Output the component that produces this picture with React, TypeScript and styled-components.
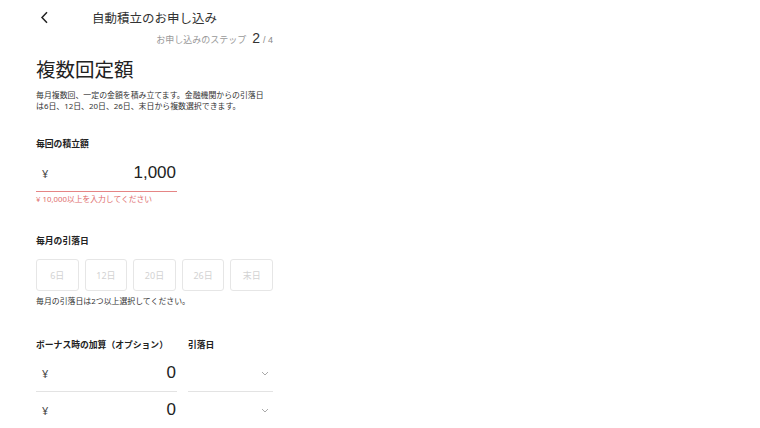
import styled, { createGlobalStyle } from "styled-components";

const GlobalStyle = createGlobalStyle`
  body {
    margin: 0;
    background: #fff;
    font-family: "Noto Sans", "Noto Sans CJK JP", sans-serif;
    color: #333;
  }
`;

const days = ["6日", "12日", "20日", "26日", "末日"];

const App = () => {
  return (
    <>
      <GlobalStyle />
      <Page>
        <Header>
          <BackButton type="button" aria-label="戻る">
            <svg width="9" height="13" viewBox="0 0 9 13">
              <path d="M7 1.2 L2 6.5 L7 11.8" fill="none" stroke="#222" strokeWidth="1.5" />
            </svg>
          </BackButton>
          <Title>自動積立のお申し込み</Title>
          <span />
        </Header>
        <StepRow>
          <StepLabel>お申し込みのステップ</StepLabel>
          <StepNow>2</StepNow>
          <StepTotal>/ 4</StepTotal>
        </StepRow>

        <Heading>複数回定額</Heading>
        <Description>
          毎月複数回、一定の金額を積み立てます。金融機関からの引落日
          <br />
          は6日、12日、20日、26日、末日から複数選択できます。
        </Description>

        <Label $gap={27}>毎回の積立額</Label>
        <AmountField $error>
          <Yen>¥</Yen>
          <Value>1,000</Value>
        </AmountField>
        <ErrorText>¥ 10,000以上を入力してください</ErrorText>

        <Label $gap={31}>毎月の引落日</Label>
        <DayGrid>
          {days.map((d) => (
            <DayButton key={d} type="button">
              {d}
            </DayButton>
          ))}
        </DayGrid>
        <Hint>毎月の引落日は2つ以上選択してください。</Hint>

        <BonusGrid>
          <Label $gap={0}>ボーナス時の加算（オプション）</Label>
          <Label $gap={0}>引落日</Label>
          {[0, 1].map((i) => (
            <BonusRow key={i}>
              <BonusAmount $first={i === 0}>
                <Yen>¥</Yen>
                <Value>0</Value>
              </BonusAmount>
              <Select $first={i === 0}>
                <svg width="8" height="5" viewBox="0 0 8 5">
                  <path d="M1 1 L4 4 L7 1" fill="none" stroke="#aaa" strokeWidth="1" />
                </svg>
              </Select>
            </BonusRow>
          ))}
        </BonusGrid>
      </Page>
    </>
  );
};

export default App;

const Page = styled.div`
  width: 237px;
  margin-left: 36px;
`;

const Header = styled.div`
  display: grid;
  grid-template-columns: 24px 1fr 24px;
  align-items: center;
  height: 28px;
  margin-top: 3px;
`;

const BackButton = styled.button`
  border: none;
  background: none;
  padding: 0 0 0 4px;
  display: flex;
  align-items: center;
  cursor: pointer;
`;

const Title = styled.h1`
  margin: 0;
  text-align: center;
  font-size: 12.5px;
  font-weight: 400;
  color: #333;
`;

const StepRow = styled.div`
  display: flex;
  justify-content: flex-end;
  align-items: baseline;
  height: 14px;
  line-height: 14px;
`;

const StepLabel = styled.span`
  font-size: 9px;
  color: #999;
  margin-right: 6px;
`;

const StepNow = styled.span`
  font-family: "Liberation Sans", sans-serif;
  font-size: 14px;
  color: #333;
  margin-right: 3px;
`;

const StepTotal = styled.span`
  font-family: "Liberation Sans", sans-serif;
  font-size: 9px;
  color: #888;
`;

const Heading = styled.h2`
  margin: 12px 0 0;
  font-family: "Noto Sans CJK JP", sans-serif;
  font-size: 19.5px;
  line-height: 24px;
  font-weight: 400;
  color: #222;
`;

const Description = styled.p`
  margin: 9px 0 0;
  font-size: 7.9px;
  line-height: 10.5px;
  white-space: nowrap;
  color: #333;
`;

const Label = styled.div<{ $gap: number }>`
  margin-top: ${(p) => p.$gap}px;
  font-size: 8.8px;
  line-height: 12px;
  font-weight: 700;
  color: #222;
`;

const AmountField = styled.div<{ $error?: boolean }>`
  display: flex;
  align-items: center;
  justify-content: space-between;
  height: 37px;
  padding: 0 1px 0 6px;
  border-bottom: 1px solid ${(p) => (p.$error ? "#e58585" : "#e3e3e3")};
  box-sizing: border-box;
  width: 141px;
  margin-top: 5px;
`;

const BonusAmount = styled(AmountField)<{ $first?: boolean }>`
  margin-top: ${(p) => (p.$first ? 4 : 0)}px;
`;

const Yen = styled.span`
  font-size: 11px;
  color: #444;
`;

const Value = styled.span`
  font-family: "Liberation Sans", sans-serif;
  font-size: 17px;
  font-weight: 400;
  color: #222;
`;

const ErrorText = styled.div`
  margin-top: 2px;
  font-size: 7.8px;
  line-height: 10px;
  color: #e06d6d;
`;

const DayGrid = styled.div`
  display: grid;
  grid-template-columns: repeat(5, 1fr);
  gap: 6px;
  margin-top: 12px;
`;

const DayButton = styled.button`
  height: 32px;
  border: 1px solid #e6e6e6;
  border-radius: 3px;
  background: #fff;
  font-family: inherit;
  font-size: 9px;
  color: #d2d2d2;
  padding: 0;
`;

const Hint = styled.div`
  margin-top: 5px;
  font-size: 7.9px;
  line-height: 10px;
  color: #333;
`;

const BonusGrid = styled.div`
  display: grid;
  grid-template-columns: 141px 85px;
  column-gap: 11px;
  margin-top: 33px;
`;

const BonusRow = styled.div`
  display: contents;
`;

const Select = styled.div<{ $first?: boolean }>`
  display: flex;
  align-items: center;
  justify-content: flex-end;
  height: 37px;
  margin-top: ${(p) => (p.$first ? 4 : 0)}px;
  padding-right: 4px;
  border-bottom: 1px solid #e3e3e3;
  box-sizing: border-box;
`;
